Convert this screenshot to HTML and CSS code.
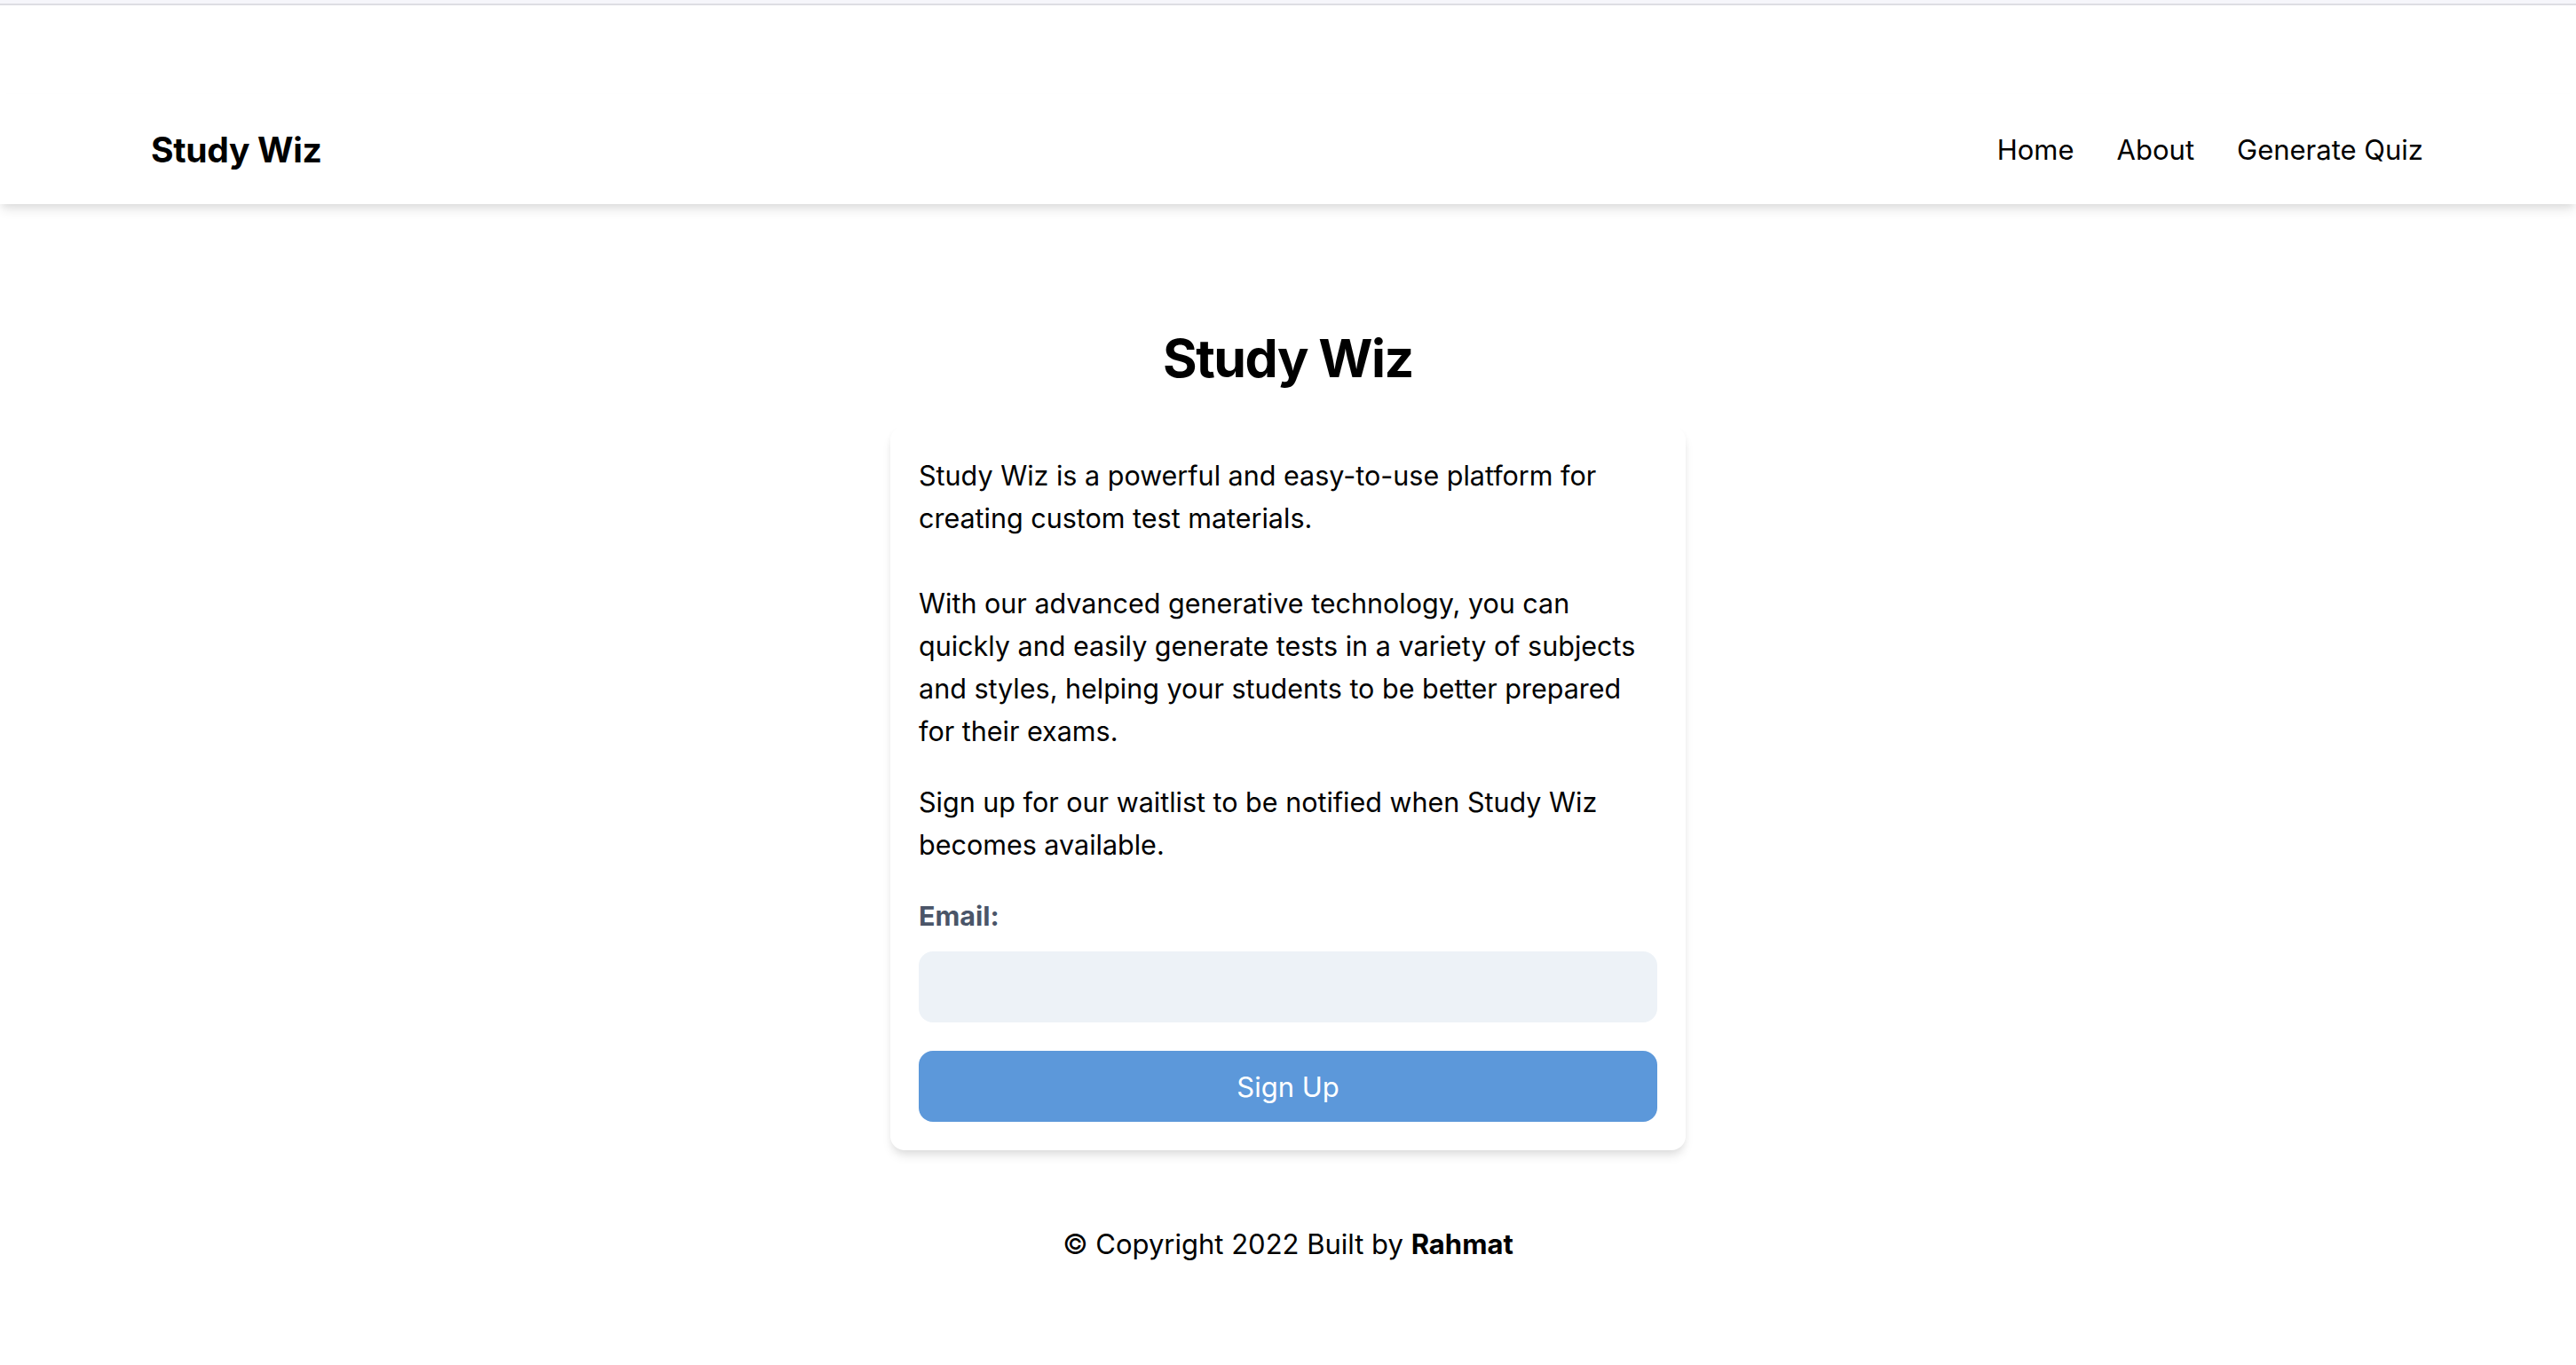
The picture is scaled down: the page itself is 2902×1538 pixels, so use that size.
FILE: index.html
```html
<!DOCTYPE html>
<html lang="en">
<head>
<meta charset="utf-8">
<title>Study Wiz</title>
<link rel="stylesheet" href="styles.css">
</head>
<body>
<div class="topbar"></div>
<header class="site-header">
  <a class="logo" href="#">Study Wiz</a>
  <nav class="nav">
    <a href="#">Home</a>
    <a href="#">About</a>
    <a href="#">Generate Quiz</a>
  </nav>
</header>
<main class="main">
  <h1 class="title">Study Wiz</h1>
  <section class="card">
    <p class="para">Study Wiz is a powerful and easy-to-use platform for creating custom test materials.<br><br>With our advanced generative technology, you can quickly and easily generate tests in a variety of subjects and styles, helping your students to be better prepared for their exams.</p>
    <p class="para">Sign up for our waitlist to be notified when Study Wiz becomes available.</p>
    <form class="form">
      <label class="label" for="email">Email:</label>
      <input class="input" id="email" type="email">
      <button class="button" type="button">Sign Up</button>
    </form>
  </section>
</main>
<footer class="footer">© Copyright 2022 Built by <strong>Rahmat</strong></footer>
</body>
</html>
```
FILE: styles.css
```css
* { box-sizing: border-box; }
html, body {
  margin: 0;
  padding: 0;
  background: #ffffff;
  color: #000000;
  font-family: Inter, "Noto Sans", "Liberation Sans", sans-serif;
}
.topbar {
  height: 6px;
  background: #f6f6fb;
  border-bottom: 2px solid #dedee3;
}
.site-header {
  margin-top: 100px;
  height: 124px;
  padding: 0 172px 0 170px;
  display: flex;
  align-items: center;
  justify-content: space-between;
  background: #fff;
  box-shadow: 0 8px 12px -2px rgba(0,0,0,0.10), 0 4px 8px -2px rgba(0,0,0,0.06);
}
.logo {
  font-size: 39px;
  font-weight: 700;
  letter-spacing: -0.3px;
  color: #000;
  text-decoration: none;
}
.nav {
  display: flex;
  gap: 48px;
}
.nav a {
  font-size: 31px;
  color: #000;
  text-decoration: none;
}
.main {
  display: flex;
  flex-direction: column;
  align-items: center;
  padding-top: 138px;
}
.title {
  margin: 0 0 40px;
  font-size: 59px;
  line-height: 72px;
  font-weight: 700;
  letter-spacing: -1.5px;
}
.card {
  width: 896px;
  padding: 32px;
  background: #fff;
  border-radius: 16px;
  box-shadow: 0 8px 12px -2px rgba(0,0,0,0.10), 0 4px 8px -2px rgba(0,0,0,0.06);
}
.para {
  margin: 0 0 32px;
  font-size: 30.5px;
  line-height: 48px;
}
.form {
  display: flex;
  flex-direction: column;
}
.label {
  font-size: 30.5px;
  line-height: 48px;
  font-weight: 700;
  color: #4a5568;
  margin-bottom: 16px;
}
.input {
  height: 80px;
  border: none;
  border-radius: 16px;
  background: #edf2f7;
  margin-bottom: 32px;
  font-size: 30.5px;
  padding: 0 24px;
}
.button {
  height: 80px;
  border: none;
  border-radius: 16px;
  background: #5c98da;
  color: #fff;
  font-family: inherit;
  font-size: 31px;
}
.footer {
  margin-top: 82px;
  text-align: center;
  font-size: 31px;
  line-height: 48px;
}
.footer strong { font-weight: 700; }
```
